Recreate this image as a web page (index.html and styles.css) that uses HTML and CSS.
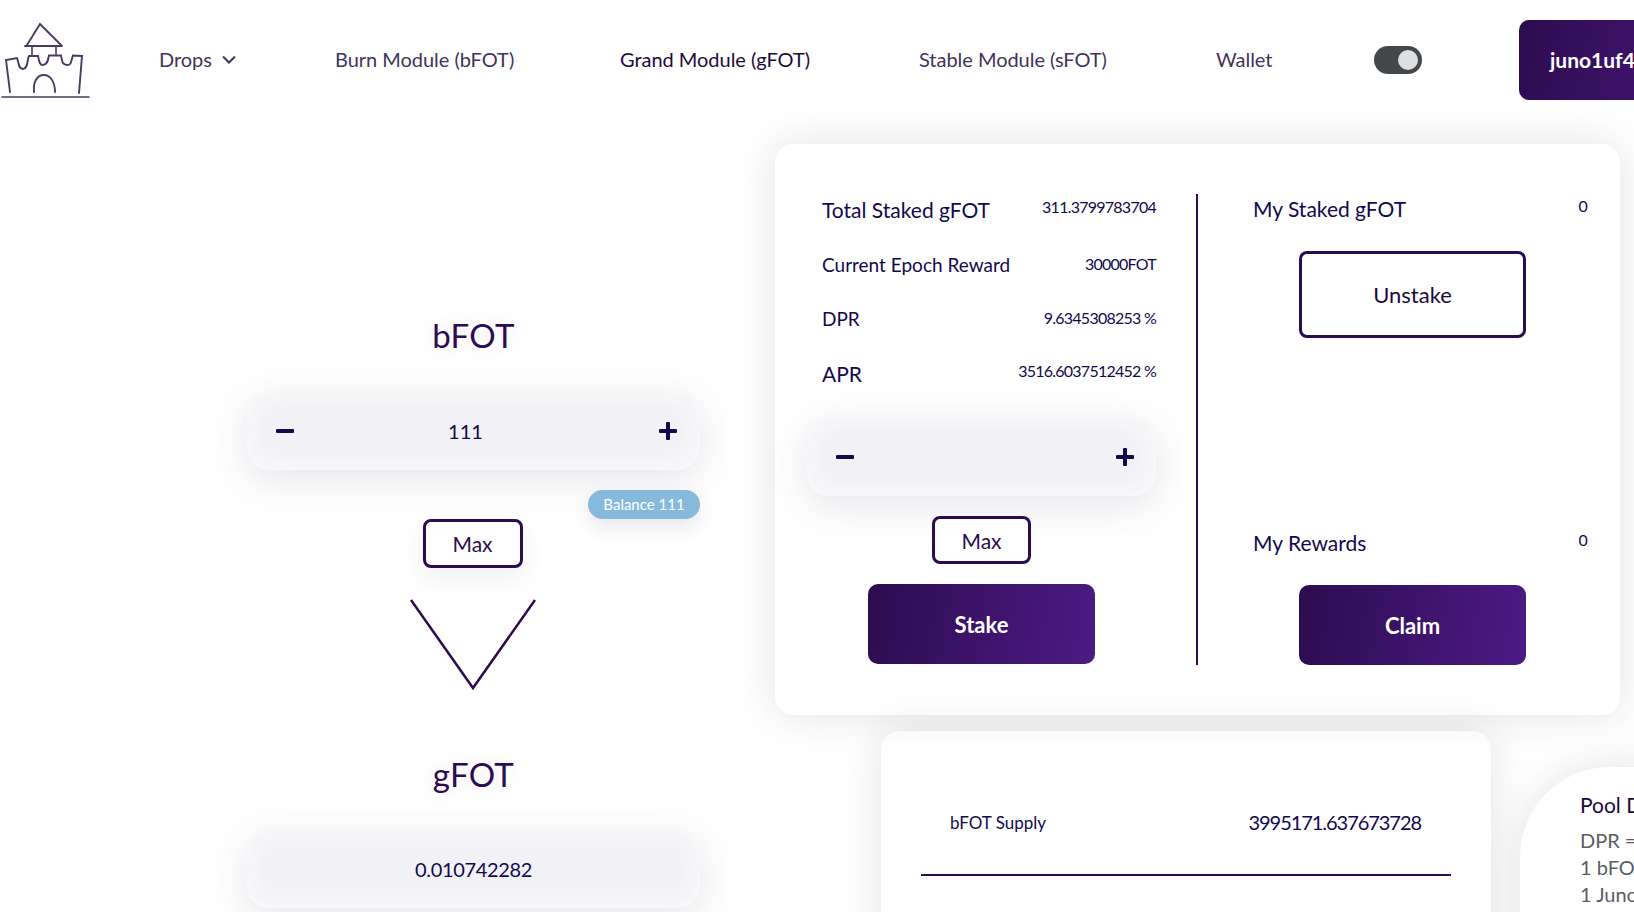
FILE: index.html
```html
<!DOCTYPE html>
<html lang="en">
<head>
  <meta charset="UTF-8">
  <meta name="viewport" content="width=device-width, initial-scale=1.0">
  <title>Grand Module</title>
  <link rel="stylesheet" href="styles.css">
</head>
<body>
  <!-- Top navigation -->
  <header class="topbar">
    <svg class="logo" width="90" height="100" viewBox="0 0 90 100" fill="none" stroke="#4a3a62" stroke-width="1.9" stroke-linecap="round">
      <path d="M27 45 L40 24 L61 45"/>
      <path d="M25 46 H62"/>
      <path d="M32 46 V55 M56 46 V55" stroke-width="1.6"/>
      <path d="M10 92 L6 60 L17 58 C19 62 18 69 23 69 C28 69 27 60 29 56 H38 C39 60 39 65 43 65 C48 65 48 59 49 55.500 L61 55.500 C62 60 62 65 67 65 C72 65 71 60 73 55.500 L82 56 L79 93"/>
      <path d="M34 92 C33 82 37 75 44 75 C51 75 55 83 55 92"/>
      <path d="M2 97 H89" stroke-width="1.600"/>
    </svg>
    <nav class="nav">
      <a class="nav-link">Drops
        <svg class="caret" width="14" height="10" viewBox="0 0 14 10" fill="none" stroke="#3f3459" stroke-width="2"><path d="M1 1.500 L7 7.500 L13 1.500"/></svg>
      </a>
      <a class="nav-link">Burn Module (bFOT)</a>
      <a class="nav-link active">Grand Module (gFOT)</a>
      <a class="nav-link">Stable Module (sFOT)</a>
      <a class="nav-link">Wallet</a>
      <div class="toggle"><span class="knob"></span></div>
      <button class="btn wallet-btn">juno1uf4g...</button>
    </nav>
  </header>

  <main class="content">
    <!-- Swap column -->
    <section class="swap">
      <h2 class="token-title">bFOT</h2>
      <div class="stepper">
        <svg width="20" height="20" viewBox="0 0 20 20" fill="#12094f"><rect x="1" y="8" width="18" height="4" rx="1"/></svg>
        <span class="stepper-value">111</span>
        <svg width="20" height="20" viewBox="0 0 20 20" fill="#12094f"><rect x="1" y="8" width="18" height="4" rx="1"/><rect x="8" y="1" width="4" height="18" rx="1"/></svg>
      </div>
      <span class="balance">Balance 111</span>
      <button class="btn-outline nudge">Max</button>
      <svg class="arrow nudge" width="126" height="94" viewBox="0 0 126 94" fill="none" stroke="#2c0b50" stroke-width="2.500"><path d="M1 2 L63 90 L125 2"/></svg>
      <h2 class="token-title second">gFOT</h2>
      <div class="stepper output"><span>0.010742282</span></div>
    </section>

    <section class="side">
      <!-- Staking card -->
      <div class="card stake-card">
        <div class="stake-left">
          <div class="stat"><span class="stat-label">Total Staked gFOT</span><span class="stat-value">311.3799783704</span></div>
          <div class="stat"><span class="stat-label small">Current Epoch Reward</span><span class="stat-value low">30000FOT</span></div>
          <div class="stat"><span class="stat-label small">DPR</span><span class="stat-value low">9.6345308253 %</span></div>
          <div class="stat"><span class="stat-label">APR</span><span class="stat-value">3516.6037512452 %</span></div>
          <div class="stepper narrow">
            <svg width="20" height="20" viewBox="0 0 20 20" fill="#12094f"><rect x="1" y="8" width="18" height="4" rx="1"/></svg>
            <svg width="20" height="20" viewBox="0 0 20 20" fill="#12094f"><rect x="1" y="8" width="18" height="4" rx="1"/><rect x="8" y="1" width="4" height="18" rx="1"/></svg>
          </div>
          <button class="btn-outline flat">Max</button>
          <button class="btn action stake-btn">Stake</button>
        </div>
        <div class="stake-right">
          <div class="stat plain"><span class="stat-label">My Staked gFOT</span><span class="stat-value">0</span></div>
          <button class="btn-outline unstake">Unstake</button>
          <div class="stat plain rewards"><span class="stat-label">My Rewards</span><span class="stat-value">0</span></div>
          <button class="btn action claim-btn">Claim</button>
        </div>
      </div>

      <div class="lower">
        <!-- Supply card -->
        <div class="card supply-card">
          <div class="supply-row">
            <span class="supply-label">bFOT Supply</span>
            <span class="supply-value">3995171.637673728</span>
          </div>
        </div>
        <!-- Pool details -->
        <div class="pool-card">
          <h3 class="pool-title">Pool Details</h3>
          <p>DPR = 9.6345308253 %</p>
          <p>1 bFOT = 0.0000967 gFOT</p>
          <p>1 Juno = 0.0000967 bFOT</p>
        </div>
      </div>
    </section>
  </main>
</body>
</html>
```

FILE: styles.css
```css
* {
  box-sizing: border-box;
}
html, body {
  height: 100%;
  overflow: hidden;
}
body {
  margin: 0;
  background-color: #fff;
  color: #2c0b50;
  font-family: Lato, "Open Sans", sans-serif;
}
button {
  font-family: inherit;
  cursor: pointer;
}

/* header */
.topbar {
  display: flex;
  align-items: flex-start;
  height: 120px;
}
.logo {
  flex: none;
  width: 90px;
  height: 100px;
}
.nav {
  display: grid;
  grid-template-columns: 176px 285px 299px 297px 158px 145px 300px;
  align-items: center;
  margin-left: 69px;
  padding-top: 20px;
  flex: none;
}
.nav-link {
  font-size: 20px;
  line-height: 22px;
  margin-top: -2px;
  color: #3f3459;
  letter-spacing: -0.03px;
  white-space: nowrap;
}
.nav-link.active {
  color: #1d0a3c;
}
.caret {
  margin-left: 5px;
  vertical-align: 2px;
}
.toggle {
  width: 48px;
  height: 28px;
  border-radius: 14px;
  background-color: #43474a;
  display: flex;
  align-items: center;
  justify-content: flex-end;
  padding-right: 4px;
}
.knob {
  width: 20px;
  height: 20px;
  border-radius: 50%;
  background-color: #dde0e3;
}
.btn {
  border: none;
  color: #fff;
  background: linear-gradient(100deg, #2d0c4f 0%, #4c1a85 100%);
  border-radius: 10px;
  font-size: 21px;
  font-weight: 700;
}
.wallet-btn {
  width: 300px;
  height: 80px;
  text-align: left;
  padding-left: 31px;
  padding-bottom: 2px;
  background: linear-gradient(100deg, #2d0c4f 0%, #3d1268 40%, #4c1a85 100%);
}

/* main layout */
.content {
  display: grid;
  grid-template-columns: 453px 845px;
  column-gap: 75px;
  padding-left: 247px;
  padding-top: 24px;
}

/* swap column */
.swap {
  display: flex;
  flex-direction: column;
  align-items: center;
  padding-top: 171px;
}
.token-title {
  margin: 0;
  font-size: 33px;
  line-height: 40px;
  font-weight: 400;
  letter-spacing: 0.3px;
  color: #2c0b50;
  text-shadow: 0 0 20px rgba(60, 50, 100, 0.12);
}
.token-title.second {
  margin-top: 62px;
}
.stepper {
  display: flex;
  align-items: center;
  justify-content: space-between;
  width: 100%;
  height: 79px;
  margin-top: 36px;
  padding: 0 22px 0 28px;
  border-radius: 22px;
  background-color: #f2f2f6;
  box-shadow: 0 10px 38px rgba(60, 55, 90, 0.13), inset 0 0 26px #fdfdfe;
  color: #12094f;
  font-size: 20px;
}
.stepper-value {
  flex: 1;
  text-align: center;
  padding-right: 22px;
}
.stepper.output {
  justify-content: center;
  margin-top: 35px;
  padding: 0;
  letter-spacing: -0.35px;
}
.stepper.narrow {
  margin-top: 28px;
  padding: 0 21px 0 28px;
  width: 349px;
}
.balance {
  align-self: flex-end;
  width: 112px;
  height: 29px;
  margin-top: 20px;
  border-radius: 15px;
  background-color: #87b9dc;
  box-shadow: 0 8px 18px rgba(60, 55, 90, 0.12);
  color: #fff;
  font-size: 15px;
  line-height: 29px;
  text-align: center;
}
.btn-outline {
  display: block;
  width: 100px;
  height: 49px;
  border: 3px solid #2c0b50;
  border-radius: 8px;
  background-color: #fff;
  box-shadow: 0 10px 24px rgba(60, 55, 90, 0.08);
  color: #2c0b50;
  font-size: 21px;
}
.nudge {
  margin-right: 2px;
}
.arrow {
  margin-top: 30px;
}

/* cards */
.card {
  background-color: #fff;
  border-radius: 18px;
  box-shadow: 0 0 40px rgba(40, 40, 60, 0.13);
}
.stake-card {
  display: flex;
  height: 571px;
  padding: 50px 33px 50px 32px;
}
.stake-left {
  width: 349px;
  flex: none;
  padding-top: 1px;
}
.stake-right {
  display: flex;
  flex-direction: column;
  flex: 1;
  margin-left: 40px;
  padding-left: 55px;
  border-left: 2px solid #2c0b50;
}
.stat {
  display: flex;
  justify-content: space-between;
  height: 30px;
  margin-bottom: 24.700px;
  padding-left: 15px;
  color: #12094f;
}
.stat.plain {
  padding-left: 0;
  margin-bottom: 0;
}
.stat-label {
  font-size: 21px;
  line-height: 30px;
}
.stat-label.small {
  font-size: 19px;
}
.stat-value {
  font-size: 16px;
  line-height: 24px;
  letter-spacing: -0.75px;
}
.stat-value.low {
  margin-top: 2px;
}
.btn-outline.flat {
  margin: 20px auto 0;
  width: 99px;
  height: 48px;
  box-shadow: none;
}
.action {
  display: block;
  width: 227px;
  height: 80px;
  font-size: 22px;
}
.stake-btn {
  margin: 20px auto 0;
}
.unstake {
  width: 227px;
  height: 87px;
  margin: 27px 0 0 46px;
  box-shadow: none;
  font-size: 22px;
  color: #1d0a3c;
}
.rewards {
  margin-top: auto;
}
.claim-btn {
  margin: 27px 0 0 46px;
}

/* lower row */
.lower {
  display: flex;
  align-items: flex-start;
  margin-top: 16px;
  margin-left: 106px;
}
.supply-card {
  flex: none;
  width: 610px;
  height: 320px;
  padding: 72px 40px 0;
  box-shadow: 0 0 40px rgba(40, 40, 60, 0.13), inset 0 26px 20px -22px rgba(40, 40, 60, 0.03);
}
.supply-row {
  display: flex;
  justify-content: space-between;
  align-items: center;
  height: 73px;
  padding: 0 30px 33px 29px;
  border-bottom: 2px solid #2c0b50;
}
.supply-label {
  font-size: 17px;
  color: #12094f;
}
.supply-value {
  font-size: 20px;
  letter-spacing: -1.05px;
  color: #12094f;
}
.pool-card {
  flex: none;
  width: 360px;
  height: 300px;
  margin: 36px 0 0 29px;
  padding: 24px 0 0 60px;
  border-radius: 90px;
  background-color: #fff;
  box-shadow: 0 0 40px rgba(40, 40, 60, 0.13);
  white-space: nowrap;
}
.pool-title {
  margin: 0 0 8px;
  font-size: 21px;
  line-height: 28px;
  font-weight: 400;
  color: #1d0a3c;
}
.pool-card p {
  margin: 0;
  font-size: 20px;
  line-height: 27px;
  color: #5c5c66;
}
```
